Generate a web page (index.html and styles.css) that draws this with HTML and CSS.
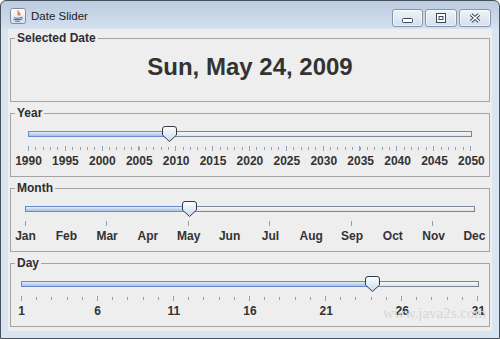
FILE: index.html
```html
<!DOCTYPE html>
<html lang="en">

<head>
    <meta charset="UTF-8">
    <title>Date Slider</title>
    <link rel="stylesheet" href="styles.css">
</head>

<body>
    <div class="window">
        <div class="titlebar">
            <svg class="app-icon" viewBox="0 0 16 16">
                <defs>
                    <linearGradient id="ig" x1="0" y1="0" x2="0" y2="1">
                        <stop offset="0" stop-color="#ffffff"/>
                        <stop offset="1" stop-color="#d5dde8"/>
                    </linearGradient>
                </defs>
                <rect x="0.5" y="0.5" width="15" height="15" rx="2" fill="url(#ig)" stroke="#7d8ca3"/>
                <path d="M8.5 2.5c-2 1.8 1.2 2.6-0.6 5M10 4.5c-1.2 1 0.6 1.6-0.4 3" fill="none" stroke="#e06a22" stroke-width="1.2"/>
                <path d="M4 9.5c1.5 1 5.5 1 7 0M3.5 11.5h8M5 13.2h5" fill="none" stroke="#4a6aa5" stroke-width="1"/>
                <path d="M11 9.3c1.8-0.4 1.8 1.4 0.2 1.6" fill="none" stroke="#4a6aa5"/>
            </svg>
            <span class="title">Date Slider</span>
            <div class="win-buttons">
                <div class="win-btn btn-min">
                    <svg width="11" height="5"><rect x="0.5" y="0.5" width="10" height="4" rx="1" fill="#fff" stroke="#3b475a"/></svg>
                </div>
                <div class="win-btn btn-max">
                    <svg width="10" height="10"><rect x="0.5" y="0.5" width="9" height="9" fill="#fff" stroke="#3b475a"/><rect x="3" y="3.5" width="4" height="3" fill="none" stroke="#3b475a"/></svg>
                </div>
                <div class="win-btn btn-close">
                    <svg width="12" height="10"><path d="M2 1.5L10 8.5M10 1.5L2 8.5" stroke="#3b475a" stroke-width="3.6"/><path d="M2 1.5L10 8.5M10 1.5L2 8.5" stroke="#fff" stroke-width="1.6"/></svg>
                </div>
            </div>
        </div>

        <div class="content">
            <fieldset class="panel">
                <legend>Selected Date</legend>
                <div class="date">Sun, May 24, 2009</div>
            </fieldset>

            <fieldset class="panel">
                <legend>Year</legend>
                <div class="slider slider-year">
                    <div class="track">
                        <div class="fill" style="width:31.67%"></div>
                        <div class="rest"></div>
                        <svg class="thumb" style="left:31.67%" width="15" height="16"><use href="#thumb-shape"/></svg>
                    </div>
                    <svg class="ticks">
                        <line x1="0" x2="100%" y1="2.5" y2="2.5" stroke-width="3" stroke-dasharray="1 6.367"/>
                        <line x1="0" x2="100%" y1="2.5" y2="2.5" stroke-width="5" stroke-dasharray="1 35.833"/>
                    </svg>
                    <div class="labels">
                        <span>1990</span><span>1995</span><span>2000</span><span>2005</span><span>2010</span>
                        <span>2015</span><span>2020</span><span>2025</span><span>2030</span><span>2035</span>
                        <span>2040</span><span>2045</span><span>2050</span>
                    </div>
                </div>
            </fieldset>

            <fieldset class="panel">
                <legend>Month</legend>
                <div class="slider slider-month">
                    <div class="track">
                        <div class="fill" style="width:36.36%"></div>
                        <div class="rest"></div>
                        <svg class="thumb" style="left:36.36%" width="15" height="16"><use href="#thumb-shape"/></svg>
                    </div>
                    <svg class="ticks">
                        <line x1="0" x2="100%" y1="2.5" y2="2.5" stroke-width="5" stroke-dasharray="1 80.45"/>
                    </svg>
                    <div class="labels">
                        <span>Jan</span><span>Feb</span><span>Mar</span><span>Apr</span><span>May</span><span>Jun</span>
                        <span>Jul</span><span>Aug</span><span>Sep</span><span>Oct</span><span>Nov</span><span>Dec</span>
                    </div>
                </div>
            </fieldset>

            <fieldset class="panel">
                <legend>Day</legend>
                <div class="slider slider-day">
                    <div class="track">
                        <div class="fill" style="width:76.67%"></div>
                        <div class="rest"></div>
                        <svg class="thumb" style="left:76.67%" width="15" height="16"><use href="#thumb-shape"/></svg>
                    </div>
                    <svg class="ticks">
                        <line x1="0" x2="100%" y1="2.5" y2="2.5" stroke-width="3" stroke-dasharray="1 14.2"/>
                        <line x1="0" x2="100%" y1="2.5" y2="2.5" stroke-width="5" stroke-dasharray="1 75"/>
                    </svg>
                    <div class="labels">
                        <span>1</span><span>6</span><span>11</span><span>16</span><span>21</span><span>26</span><span>31</span>
                    </div>
                </div>
                <div class="watermark">www.java2s.com</div>
            </fieldset>
        </div>
    </div>

    <svg width="0" height="0" class="defs">
        <defs>
            <linearGradient id="tg" x1="0" y1="0" x2="0" y2="1">
                <stop offset="0" stop-color="#ffffff"/>
                <stop offset="1" stop-color="#c5d8f0"/>
            </linearGradient>
            <path id="thumb-shape" d="M0.5 3Q0.5 0.5 3 0.5L12 0.5Q14.5 0.5 14.5 3L14.5 9L7.5 15.5L0.5 9Z" fill="url(#tg)" stroke="#2f3a48"/>
        </defs>
    </svg>
</body>

</html>
```

FILE: styles.css
```css
* {
    margin: 0;
    padding: 0;
    box-sizing: border-box;
}

body {
    width: 500px;
    height: 339px;
    overflow: hidden;
    font-family: "Liberation Sans", Arial, sans-serif;
}

.defs {
    position: absolute;
}

.window {
    width: 500px;
    height: 339px;
    border: 1px solid #46505c;
    border-radius: 6px 6px 0 0;
    background: linear-gradient(#bccbdf 0, #d3dfee 27px, #dae5f2 28px);
    display: flex;
    flex-direction: column;
    overflow: hidden;
}

/* title bar */
.titlebar {
    height: 28px;
    flex: none;
    display: flex;
    align-items: center;
    padding: 0 8px 0 9px;
}

.app-icon {
    width: 16px;
    height: 16px;
    margin-top: 2px;
}

.title {
    margin-left: 5px;
    margin-top: 2px;
    font-size: 11.5px;
    color: #1c1c1c;
}

.win-buttons {
    margin-left: auto;
    align-self: flex-start;
    margin-top: 8px;
    display: flex;
    gap: 2px;
}

.win-btn {
    width: 32px;
    height: 18px;
    border: 1px solid #8594a8;
    border-radius: 3px;
    background: linear-gradient(#eef3f9, #d4deeb);
    box-shadow: inset 0 0 0 1px rgba(255, 255, 255, 0.6);
    display: flex;
    justify-content: center;
    align-items: center;
}

.win-btn svg {
    display: block;
}

.btn-min {
    width: 31px;
    align-items: flex-end;
    padding-bottom: 3px;
}

/* content */
.content {
    flex: 1;
    margin: 0 7px 7px;
    background: #eeeeee;
    display: flex;
    flex-direction: column;
    gap: 4px;
    padding: 2px 2px 0;
}

.panel {
    position: relative;
    border: 1px solid #a4a4a4;
    min-width: 0;
    padding: 0;
}

.panel legend {
    margin-left: 4px;
    padding: 0 2px;
    font-weight: bold;
    font-size: 12px;
    line-height: 14px;
    color: #2e2e2e;
}

.date {
    height: 56px;
    padding-top: 8px;
    text-align: center;
    font-weight: bold;
    font-size: 24px;
    line-height: 28px;
    color: #333333;
}

/* sliders */
.slider {
    height: 56px;
    padding-top: 11px;
}

.slider-year {
    margin: 0 17px;
}

.slider-month {
    margin: 0 14px;
}

.slider-day {
    margin: 0 10px;
}

.track {
    position: relative;
    height: 6px;
    display: flex;
}

.fill {
    border: 1px solid #6a8acb;
    border-right: 0;
    background: linear-gradient(#e3ebf8, #a9bfe3);
}

.rest {
    flex: 1;
    border: 1px solid #7b8797;
    border-left: 0;
    background: linear-gradient(#f7f7f7, #e4e4e4);
}

.thumb {
    position: absolute;
    top: -5px;
    margin-left: -7px;
}

.ticks {
    display: block;
    width: 100%;
    height: 5px;
    margin-top: 9px;
    stroke: #8ea2bf;
    shape-rendering: crispEdges;
}

.labels {
    margin: 3px 0.5px 0;
    height: 14px;
    display: flex;
    justify-content: space-between;
    font-weight: bold;
    font-size: 12px;
    line-height: 14px;
    color: #333333;
}

.labels span {
    width: 0;
    display: flex;
    justify-content: center;
    white-space: nowrap;
}

.watermark {
    position: absolute;
    left: 372px;
    top: 35px;
    font-family: "Liberation Serif", serif;
    font-size: 15px;
    line-height: 16px;
    color: #d6d6d6;
}
```
